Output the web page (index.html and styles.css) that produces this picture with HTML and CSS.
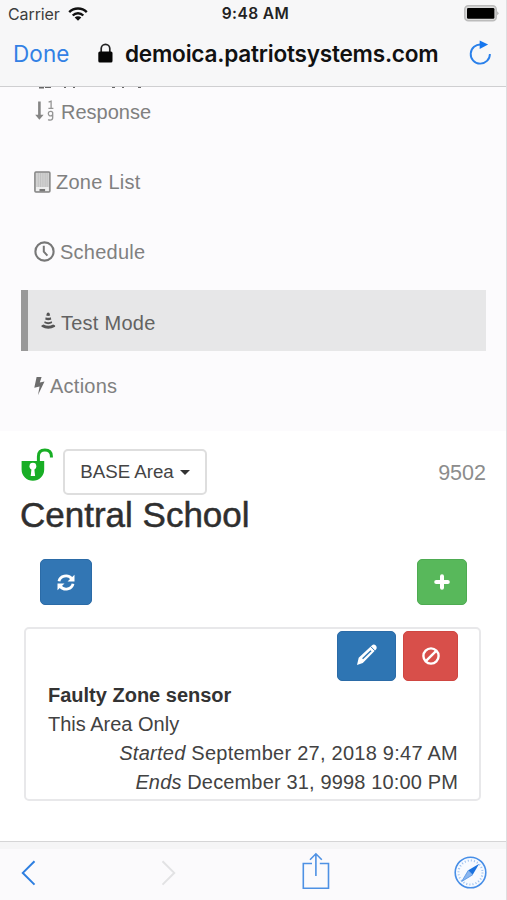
FILE: index.html
```html
<!DOCTYPE html>
<html lang="en">
<head>
<meta charset="utf-8">
<title>Central School</title>
<link rel="stylesheet" href="styles.css">
</head>
<body>
<div class="phone">
  <header class="browser">
    <div class="status">
      <div class="carrier"><span class="carrier-name">Carrier</span>
        <svg width="20" height="14" viewBox="0 0 20 14" fill="none" stroke="#111" stroke-width="2.4"><path d="M1.2 5.2a12.4 12.4 0 0 1 17.6 0M4.7 8.5a7.5 7.5 0 0 1 10.6 0"/><path d="M10 13.8 6.7 10.6a4.7 4.7 0 0 1 6.6 0z" fill="#111" stroke="none"/></svg>
      </div>
      <span class="time">9:48 AM</span>
      <svg class="battery" width="35" height="17" viewBox="0 0 35 17"><rect x=".8" y=".8" width="31.4" height="15" rx="3.5" fill="#dcdcdc" stroke="#bcbcbc" stroke-width="1.6"/><rect x="3" y="3" width="27.4" height="10.8" rx="1.2" fill="#000"/><path d="M33.4 6.2q2 2 0 4z" fill="#999"/></svg>
    </div>
    <div class="address">
      <span class="done">Done</span>
      <svg class="lock" width="15" height="20" viewBox="0 0 15 20"><path d="M3.2 9V5.6a4.3 4.3 0 0 1 8.6 0V9" fill="none" stroke="#222" stroke-width="1.7"/><rect x=".3" y="8.6" width="14.2" height="10.9" rx="1.5" fill="#050505"/></svg>
      <span class="url">demoica.patriotsystems.com</span>
      <svg class="reload" width="23" height="26" viewBox="0 0 23 26"><path d="M12.2 4.5A9.6 9.6 0 1 0 20.9 14" fill="none" stroke="#2a80ea" stroke-width="1.9"/><path d="m10.7.6 8.4 3.9-8.4 4.6z" fill="#1676ee"/></svg>
    </div>
  </header>

  <nav class="menu">
    <svg class="clipped" width="130" height="2" viewBox="0 0 130 2" fill="#666"><path d="M3 0h5v1.5H3zm6 0h6v1H9zm19 0h2v1h-2zm9 0h2v1h-2zm39 0h3v1h-3zm10 0h2v1h-2zm16 0h3v1h-3z"/></svg>
    <a class="item"><svg class="i-sort" width="21" height="24" viewBox="0 0 21 24"><path d="M5.4 1.5V17" stroke="#858585" stroke-width="2.6"/><path d="M1.2 14.8h8.4l-4.2 5z" fill="#858585"/><path d="m14.6 2.2 2.5-1v7M14.4 8.3h5M18.7 14.6a2.3 2.3 0 1 1 0-2v5.2q0 2.4-2.5 2.4-1.4 0-2-.7" fill="none" stroke="#949494" stroke-width="1.3"/></svg><span>Response</span></a>
    <a class="item"><svg class="i-zone" width="17" height="22" viewBox="0 0 17 22"><rect x=".9" y=".9" width="15" height="20" rx="1" fill="#d2d2d2" stroke="#858585" stroke-width="1.5"/><path d="M4.3 2v14M6.6 2v14M8.9 2v14M11.2 2v14M13.2 2v14" stroke="#bdbdbd" stroke-width=".8"/><path d="M2 16h12.8v4H2z" fill="#eee"/><path d="M5.5 20.3v-2.3h5.6v2.3z" fill="#777"/></svg><span class="wide">Zone List</span></a>
    <a class="item"><svg class="i-clock" width="21" height="21" viewBox="0 0 21 21" fill="none" stroke="#777" stroke-width="2.1"><circle cx="10.5" cy="10.5" r="9.1"/><path d="M9.8 4.8v5.8l3.6 4" stroke-width="2"/></svg><span class="wide">Schedule</span></a>
    <a class="item active"><svg class="i-cone" width="15" height="18" viewBox="0 0 15 18" fill="#555"><path d="M6 1q1.2-1.2 2.4 0l.8 2.6q-2 .8-4 0zM4.7 5.3q2.5 1.1 5 0l.6 2.1q-3 1.5-6.1 0zM3.7 9.3q3.5 1.8 7 0l.5 1.8q-4 2.1-8 0zM.5 13.4l2-1q5 2.7 9.6 0l2 1v1.4q-6.8 4-13.6 0z"/></svg><span class="wide">Test Mode</span></a>
    <a class="item"><svg class="i-bolt" width="11" height="20" viewBox="0 0 11 20"><path d="M2.6 1h5L5.8 6.5l4.7-1.1L4 19l1.6-8.5L.3 11.8z" fill="#6d6d6d"/></svg><span class="wide">Actions</span></a>
  </nav>

  <main class="content">
    <div class="area">
      <svg class="unlock" width="33" height="35" viewBox="0 0 33 35"><path d="M1.6 13h22.6v8.4a11.3 11.3 0 0 1-22.6 0z" fill="#18ae25"/><path d="M18.4 13.5V8.4q0-6.5 6.5-6.5t6.5 6.4v1.3" fill="none" stroke="#18ae25" stroke-width="3"/><circle cx="12.9" cy="18.2" r="3.4" fill="#fff"/><path d="M11.7 19h2.4l1 9h-4.4z" fill="#fff"/></svg>
      <button class="dropdown"><span>BASE Area</span><i class="caret"></i></button>
      <span class="number">9502</span>
    </div>
    <h1>Central School</h1>
    <div class="tools">
      <button class="btn refresh"><svg width="18" height="17" viewBox="0 0 18 17"><g fill="none" stroke="#fff" stroke-width="2.8"><path d="M2 7.2A7 6.2 0 0 1 14.6 4.5M16 9.8A7 6.2 0 0 1 3.4 12.5"/></g><path d="M17.5.8v6.8h-7zM.5 16.2V9.4h7z" fill="#fff"/></svg></button>
      <button class="btn add"><svg width="16" height="16" viewBox="0 0 16 16" stroke="#fff" stroke-width="4" stroke-linecap="round"><path d="M8 2.2v11.6M2.2 8h11.6"/></svg></button>
    </div>
    <section class="card">
      <div class="card-tools">
        <button class="btn edit"><svg width="22" height="22" viewBox="0 0 22 22"><path d="m1 21 1.7-7.3L15.8 1.4q2.2-1.8 4 .2t0 4.1L6.8 18.9z" fill="#fff"/><path d="m6.6 14.8 8.4-8" stroke="#2e75b3" stroke-width="1.4"/><path d="m14.7 2.5 4.2 4.3" stroke="#2e75b3"/></svg></button>
        <button class="btn ban"><svg width="18" height="18" viewBox="0 0 18 18" fill="none" stroke="#fff" stroke-width="2.4"><circle cx="9" cy="9" r="7.6"/><path d="M3.6 14.4 14.4 3.6"/></svg></button>
      </div>
      <p class="title">Faulty Zone sensor</p>
      <p class="scope">This Area Only</p>
      <p class="date started"><em>Started</em> September 27, 2018 9:47 AM</p>
      <p class="date ends"><em>Ends</em> December 31, 9998 10:00 PM</p>
    </section>
  </main>

  <footer class="toolbar">
    <svg width="15" height="26" viewBox="0 0 15 26" fill="none" stroke="#2d7ee0" stroke-width="2"><path d="M13.5 1.2 1.8 12.9l11.7 11.7"/></svg>
    <svg class="forward" width="15" height="26" viewBox="0 0 15 26" fill="none" stroke="#e2e2e4" stroke-width="2"><path d="m1.5 1.2 11.7 11.7L1.5 24.6"/></svg>
    <svg class="share" width="28" height="38" viewBox="0 0 28 38" fill="none" stroke="#4e91e4" stroke-width="1.6"><path d="M10 11.5H1.3v24.7h25.2V11.5h-8.7M13.9 24V1.8M8 7.7l5.9-5.9 5.9 5.9"/></svg>
    <svg class="compass" width="33" height="33" viewBox="0 0 33 33"><circle cx="16.5" cy="16.5" r="15.3" fill="#f7faff" stroke="#478ee7" stroke-width="1.6"/><circle cx="16.5" cy="16.5" r="12" fill="none" stroke="#9bc0ef" stroke-width="2" stroke-dasharray="1 2.142"/><path d="M25.2 7.7 18.7 18.8l-4.4-4.5z" fill="#1b72df"/><path d="m14.3 14.3 4.4 4.5L7.7 25.5z" fill="#8ab6ef" stroke="#4e91e4" stroke-width=".8"/></svg>
  </footer>
</div>
</body>
</html>
```
FILE: styles.css
```css
* { box-sizing: border-box; }
body { margin: 0; background: #fff; font-family: "Liberation Sans", Arial, sans-serif; color: #424242; }
svg { display: block; flex: none; }
p, h1 { margin: 0; }
button { padding: 0; font: inherit; }
.phone { width: 507px; height: 900px; display: flex; flex-direction: column; overflow: hidden; border-right: 1px solid #dedee0; }

.browser { height: 87px; flex: none; background: #f7f7f8; border-bottom: 1px solid #cfcfd1; font-family: Inter, sans-serif; }
.status { height: 27px; display: grid; grid-template-columns: 1fr auto 1fr; align-items: center; padding: 0 7px 0 8px; }
.carrier { display: flex; align-items: center; gap: 8px; font-size: 16px; color: #3d3d3d; }
.carrier-name { width: 52px; letter-spacing: -0.1px; }
.time { font-size: 15.5px; font-weight: 600; color: #222; letter-spacing: 0.4px; padding-left: 4px; }
.battery { justify-self: end; }
.address { height: 52px; display: flex; align-items: center; padding-left: 13px; white-space: nowrap; }
.done { width: 85px; font-size: 22.5px; color: #3381e5; letter-spacing: 0.1px; }
.url { margin-left: 12px; width: 344px; font-size: 22.6px; font-weight: 600; letter-spacing: -0.23px; color: #111; }

.menu { height: 344px; flex: none; background: #fcfbfd; padding: 0 20px; font-size: 20px; color: #808080; }
.clipped { margin-left: 16px; }
.item { display: flex; align-items: center; height: 46px; margin-bottom: 24px; padding-left: 14px; }
.item span { line-height: 24px; }
.item .wide { letter-spacing: 0.25px; }
.i-sort { margin-right: 6px; }
.i-zone { margin-right: 5px; }
.i-clock { margin: -2px 5px 0 0; }
.active { height: 61px; margin: -9px 0 13px 1px; width: 465px; padding: 5px 0 0 13px; background: #e7e7e8; border-left: 7px solid #999; color: #626262; }
.i-cone { margin: -4px 5px 0 0; }
.i-bolt { margin-right: 5px; }
.active + .item { margin-top: -1px; }

.content { flex: 1; padding: 18px 20px 0; }
.area { display: flex; height: 46px; }
.unlock { margin: -1px 10px 0 0; }
.dropdown { width: 144px; height: 46px; display: flex; align-items: center; justify-content: center; gap: 6px; background: #fff; border: 2px solid #dedede; border-radius: 5px; font-size: 18.7px; color: #444; white-space: nowrap; }
.caret { border: 5px solid transparent; border-top-color: #333; border-bottom: 0; }
.number { margin-left: auto; font-size: 21.5px; line-height: 48px; color: #8c8c8c; }
h1 { font-size: 35px; line-height: 40px; font-weight: 400; color: #2f2f2f; -webkit-text-stroke: 0.5px #2f2f2f; white-space: nowrap; }
.tools { display: flex; justify-content: space-between; padding: 24px 19px 22px 20px; }
.btn { display: flex; align-items: center; justify-content: center; border: 1px solid; border-radius: 5px; }
.refresh { width: 52px; height: 46px; background: #3276b4; border-color: #2b6ba7; }
.add { width: 50px; height: 46px; background: #58b85b; border-color: #4eab52; }
.card { width: 457px; height: 174px; margin-left: 4px; border: 2px solid #e8e8ea; border-radius: 5px; padding: 2px 21px 0 22px; font-size: 20px; line-height: 29px; white-space: nowrap; }
.card-tools { display: flex; justify-content: flex-end; gap: 7px; }
.edit { width: 59px; height: 50px; background: #2e75b3; border-color: #2b6ba7; }
.edit svg { margin-top: -3px; }
.ban { width: 55px; height: 50px; background: #d84f4a; border-color: #cf4641; }
.title { font-weight: 700; color: #333; }
.date { text-align: right; }
.started { letter-spacing: 0.25px; }
.ends { letter-spacing: 0.15px; }

.toolbar { height: 59px; flex: none; display: flex; align-items: center; padding: 3px 19px 0 21px; background: #fbfafc; border-top: 1px solid #d5d5d6; box-shadow: inset 0 7px 0 #f5f5f6; }
.forward { margin-left: 125px; }
.share { margin: -4px 0 0 126px; }
.compass { margin-left: auto; }
```
